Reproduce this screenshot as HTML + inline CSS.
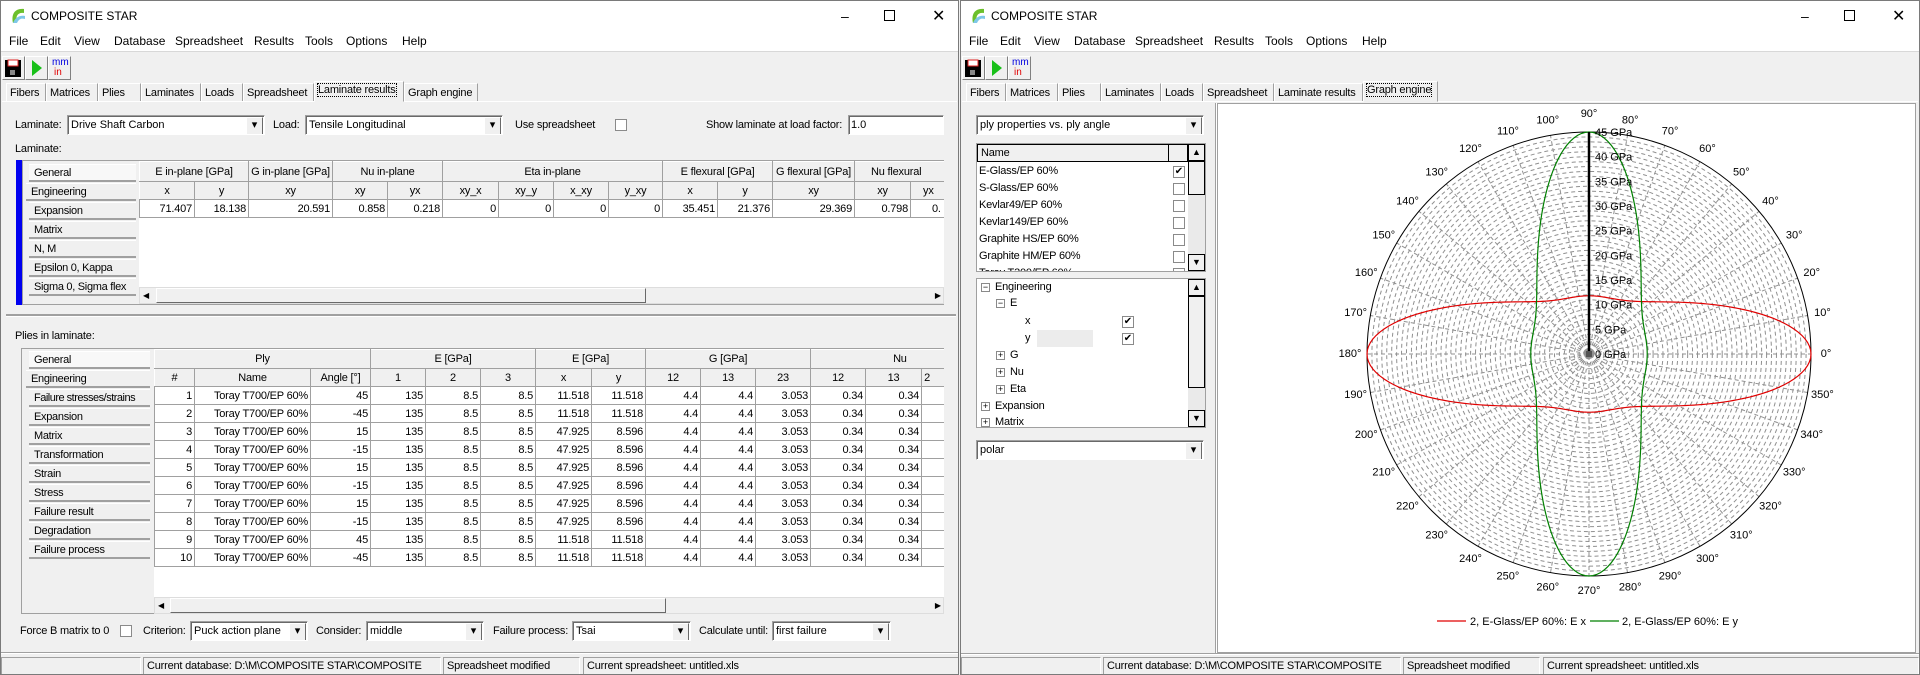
<!DOCTYPE html>
<html><head><meta charset="utf-8">
<style>
*{box-sizing:border-box;margin:0;padding:0}
body{width:1920px;height:675px;overflow:hidden;background:#f0f0f0;font-family:"Liberation Sans",sans-serif;font-size:11px;color:#000;position:relative}
.a{position:absolute}
.win{position:absolute;top:0;height:675px;background:#f0f0f0;border:1px solid #7a7a7a;overflow:hidden}
.title{position:absolute;left:0;top:0;right:0;height:29px;background:#fff}
.title span{position:absolute;left:30px;top:8px;font-size:12px}
.menu{position:absolute;left:0;top:29px;right:0;height:22px;background:#fff;border-bottom:1px solid #d8d8d8;font-size:12px}
.menu b{position:absolute;top:4px;font-weight:normal}
.wb{position:absolute;top:7px;font-size:14px}
.tb{position:absolute;top:55px;width:23px;height:24px;background:#f0f0f0;border:1px solid;border-color:#fff #808080 #808080 #fff}
.tab{position:absolute;top:82px;height:19px;border:1px solid;border-color:#fff #a0a0a0 #f0f0f0 #fff;padding:3px 0 0 3px;font-size:11px;letter-spacing:-0.2px;white-space:nowrap;background:#f0f0f0;overflow:hidden}
.tab.sel{top:80px;height:21px;padding-top:2px;z-index:2}
.tab.sel i{font-style:normal;outline:1px dotted #000;outline-offset:0}
.panel{position:absolute;top:100px;left:1px;right:1px;border-top:1px solid #fff}
.cb{position:absolute;height:20px;background:#fff;border:1px solid;border-color:#a0a0a0 #fff #fff #a0a0a0;box-shadow:inset 1px 1px 0 #696969;padding:3px 0 0 3px;font-size:11px;white-space:nowrap;overflow:hidden}
.cb:after{content:"▾";position:absolute;right:1px;top:1px;width:15px;height:16px;background:#f0f0f0;border:1px solid;border-color:#fff #696969 #696969 #fff;font-size:11px;text-align:center;line-height:14px}
.cb.noarr:after{display:none}
.chk{position:absolute;width:12px;height:12px;border:1px solid #8a8a8a;background:#fff;font-size:10px;line-height:10px;text-align:center}
.lbl{position:absolute;font-size:11px;white-space:nowrap;letter-spacing:-0.2px}
table{border-collapse:collapse;table-layout:fixed;position:absolute}
td{border:1px solid #a0a0a0;height:18px;padding:0 2px;white-space:nowrap;overflow:hidden;font-size:11px;letter-spacing:-0.2px}
td.h{background:#f0f0f0;text-align:center;border-color:#fff #a0a0a0 #a0a0a0 #fff}
td.r{text-align:right;background:#fff}
.lt{position:absolute;height:18px;background:#f0f0f0;border-bottom:2px solid #a0a0a0;border-top:1px solid #fff;padding:2px 0 0 5px;font-size:11px;letter-spacing:-0.3px;white-space:nowrap;overflow:hidden}
.sb{position:absolute;height:17px;background:#f0f0f0;border:1px solid #ddd}
.sb .th{position:absolute;top:0;height:15px;background:#f0f0f0;border:1px solid;border-color:#fff #696969 #696969 #fff}
.st{position:absolute;top:656px;height:19px;border:1px solid;border-color:#a0a0a0 #fff #fff #a0a0a0;padding:2px 0 0 3px;font-size:11px;letter-spacing:-0.2px;white-space:nowrap;overflow:hidden}
.pt{font-size:11px;fill:#000;font-family:"Liberation Sans",sans-serif}
</style></head><body>

<!-- LEFT WINDOW -->
<div class="win" style="left:0;width:959px">
 <div class="title">
  <svg class="a" style="left:8px;top:6px" width="18" height="18" viewBox="0 0 18 18"><path d="M15 2 C6 1 2 7 4 16 L8 16 C6 9 9 5 15 6Z" fill="#6cc02c"/><path d="M4 16 L8 16 C10 12 12 11 16 12 L16 9 C10 8 6 11 4 16Z" fill="#7ec8e8"/></svg>
  <span>COMPOSITE STAR</span>
  <div class="wb" style="left:840px">&#8211;</div><div class="wb" style="left:883px;width:11px;height:11px;border:1px solid #000;top:9px"></div><div class="wb" style="left:931px;top:5px;font-size:16px">✕</div>
 </div>
 <div class="menu"><b style="left:8px">File</b><b style="left:39px">Edit</b><b style="left:73px">View</b><b style="left:113px">Database</b><b style="left:174px">Spreadsheet</b><b style="left:253px">Results</b><b style="left:304px">Tools</b><b style="left:345px">Options</b><b style="left:401px">Help</b></div>
 <div class="tb" style="left:1px"><svg width="21" height="22"><rect x="2" y="3" width="16" height="17" fill="#000"/><rect x="5" y="3" width="10" height="6" fill="#fff" stroke="#e02020"/><rect x="7" y="13" width="5" height="5" fill="#888"/></svg></div>
 <div class="tb" style="left:24px"><svg width="21" height="22"><path d="M6 3 L16 11 L6 19Z" fill="#18c018"/></svg></div>
 <div class="tb" style="left:47px"><div class="a" style="left:3px;top:1px;color:#0000e0;font-size:10px;line-height:10px">mm</div><div class="a" style="left:5px;top:11px;color:#e00000;font-size:10px;line-height:10px">in</div></div>
 <div class="tab" style="left:5px;width:40px">Fibers</div><div class="tab" style="left:45px;width:52px">Matrices</div><div class="tab" style="left:97px;width:43px">Plies</div><div class="tab" style="left:140px;width:60px">Laminates</div><div class="tab" style="left:200px;width:42px">Loads</div><div class="tab" style="left:242px;width:71px">Spreadsheet</div><div class="tab sel" style="left:313px;width:90px"><i>Laminate results</i></div><div class="tab" style="left:403px;width:74px">Graph engine</div>
 <div class="panel" style="height:554px"></div>

 <div class="lbl" style="left:14px;top:118px">Laminate:</div>
 <div class="cb" style="left:66px;top:114px;width:198px">Drive Shaft Carbon</div>
 <div class="lbl" style="left:272px;top:118px">Load:</div>
 <div class="cb" style="left:304px;top:114px;width:198px">Tensile Longitudinal</div>
 <div class="lbl" style="left:514px;top:118px">Use spreadsheet</div>
 <div class="chk" style="left:614px;top:118px"></div>
 <div class="lbl" style="left:705px;top:118px">Show laminate at load factor:</div>
 <div class="cb noarr" style="left:847px;top:114px;width:96px;padding-left:2px">1.0</div>
 <div class="lbl" style="left:14px;top:142px">Laminate:</div>

 <!-- upper grid -->
 <div class="a" style="left:15px;top:159px;width:6px;height:145px;background:#0000f0"></div>
 <div class="a" style="left:21px;top:159px;width:922px;height:145px;border:1px solid #a0a0a0;border-right:none;background:#f0f0f0"></div>
 <div class="lt" style="left:28px;top:163px;width:107px;background:#f8f8f8">General</div>
 <div class="lt" style="left:25px;top:182px;width:110px">Engineering</div>
 <div class="lt" style="left:28px;top:201px;width:107px">Expansion</div>
 <div class="lt" style="left:28px;top:220px;width:107px">Matrix</div>
 <div class="lt" style="left:28px;top:239px;width:107px">N, M</div>
 <div class="lt" style="left:28px;top:258px;width:107px">Epsilon 0, Kappa</div>
 <div class="lt" style="left:28px;top:277px;width:107px">Sigma 0, Sigma flex</div>
 <div class="a" style="left:138px;top:160px;width:805px;height:126px;background:#fff;overflow:hidden">
 <table style="left:0;top:0;width:860px">
  <colgroup><col style="width:55px"><col style="width:54px"><col style="width:84px"><col style="width:55px"><col style="width:55px"><col style="width:56px"><col style="width:55px"><col style="width:55px"><col style="width:54px"><col style="width:55px"><col style="width:55px"><col style="width:82px"><col style="width:56px"><col style="width:89px"></colgroup>
  <tr style="height:20px"><td class="h" colspan="2">E in-plane [GPa]</td><td class="h">G in-plane [GPa]</td><td class="h" colspan="2">Nu in-plane</td><td class="h" colspan="4">Eta in-plane</td><td class="h" colspan="2">E flexural [GPa]</td><td class="h">G flexural [GPa]</td><td class="h" colspan="2" style="text-align:left;padding-left:16px">Nu flexural</td></tr>
  <tr><td class="h">x</td><td class="h">y</td><td class="h">xy</td><td class="h">xy</td><td class="h">yx</td><td class="h">xy_x</td><td class="h">xy_y</td><td class="h">x_xy</td><td class="h">y_xy</td><td class="h">x</td><td class="h">y</td><td class="h">xy</td><td class="h">xy</td><td class="h" style="text-align:left;padding-left:12px">yx</td></tr>
  <tr><td class="r">71.407</td><td class="r">18.138</td><td class="r">20.591</td><td class="r">0.858</td><td class="r">0.218</td><td class="r">0</td><td class="r">0</td><td class="r">0</td><td class="r">0</td><td class="r">35.451</td><td class="r">21.376</td><td class="r">29.369</td><td class="r">0.798</td><td style="background:#fff;padding-left:21px">0.</td></tr>
 </table></div>
 <div class="sb" style="left:138px;top:286px;width:805px"><div class="a" style="left:3px;top:3px;font-size:8px">◀</div><div class="th" style="left:16px;width:490px"></div><div class="a" style="right:2px;top:3px;font-size:8px">▶</div></div>
 <div class="a" style="left:5px;top:313px;width:950px;height:3px;border-top:2px solid #a0a0a0;border-bottom:1px solid #fff"></div>

 <div class="lbl" style="left:14px;top:329px">Plies in laminate:</div>
 <!-- lower grid -->
 <div class="a" style="left:20px;top:347px;width:923px;height:266px;border:1px solid #a0a0a0;border-right:none;background:#f0f0f0"></div>
 <div class="lt" style="left:28px;top:350px;width:121px;background:#f8f8f8">General</div>
 <div class="lt" style="left:25px;top:369px;width:124px">Engineering</div>
 <div class="lt" style="left:28px;top:388px;width:121px;letter-spacing:-0.5px">Failure stresses/strains</div>
 <div class="lt" style="left:28px;top:407px;width:121px">Expansion</div>
 <div class="lt" style="left:28px;top:426px;width:121px">Matrix</div>
 <div class="lt" style="left:28px;top:445px;width:121px">Transformation</div>
 <div class="lt" style="left:28px;top:464px;width:121px">Strain</div>
 <div class="lt" style="left:28px;top:483px;width:121px">Stress</div>
 <div class="lt" style="left:28px;top:502px;width:121px">Failure result</div>
 <div class="lt" style="left:28px;top:521px;width:121px">Degradation</div>
 <div class="lt" style="left:28px;top:540px;width:121px">Failure process</div>
 <div class="a" style="left:153px;top:348px;width:790px;height:248px;background:#fff;overflow:hidden">
 <table style="left:0;top:0;width:840px">
  <colgroup><col style="width:40px"><col style="width:116px"><col style="width:60px"><col style="width:55px"><col style="width:55px"><col style="width:55px"><col style="width:56px"><col style="width:54px"><col style="width:55px"><col style="width:55px"><col style="width:55px"><col style="width:55px"><col style="width:56px"><col style="width:73px"></colgroup>
  <tr style="height:19px"><td class="h" colspan="3">Ply</td><td class="h" colspan="3">E [GPa]</td><td class="h" colspan="2">E [GPa]</td><td class="h" colspan="3">G [GPa]</td><td class="h" colspan="3" style="text-align:left;padding-left:82px">Nu</td></tr>
  <tr><td class="h">#</td><td class="h">Name</td><td class="h">Angle [°]</td><td class="h">1</td><td class="h">2</td><td class="h">3</td><td class="h">x</td><td class="h">y</td><td class="h">12</td><td class="h">13</td><td class="h">23</td><td class="h">12</td><td class="h">13</td><td class="h" style="text-align:left">2</td></tr>
  <tr><td class="r">1</td><td class="r">Toray T700/EP 60%</td><td class="r">45</td><td class="r">135</td><td class="r">8.5</td><td class="r">8.5</td><td class="r">11.518</td><td class="r">11.518</td><td class="r">4.4</td><td class="r">4.4</td><td class="r">3.053</td><td class="r">0.34</td><td class="r">0.34</td><td class="r"></td></tr>
  <tr><td class="r">2</td><td class="r">Toray T700/EP 60%</td><td class="r">-45</td><td class="r">135</td><td class="r">8.5</td><td class="r">8.5</td><td class="r">11.518</td><td class="r">11.518</td><td class="r">4.4</td><td class="r">4.4</td><td class="r">3.053</td><td class="r">0.34</td><td class="r">0.34</td><td class="r"></td></tr>
  <tr><td class="r">3</td><td class="r">Toray T700/EP 60%</td><td class="r">15</td><td class="r">135</td><td class="r">8.5</td><td class="r">8.5</td><td class="r">47.925</td><td class="r">8.596</td><td class="r">4.4</td><td class="r">4.4</td><td class="r">3.053</td><td class="r">0.34</td><td class="r">0.34</td><td class="r"></td></tr>
  <tr><td class="r">4</td><td class="r">Toray T700/EP 60%</td><td class="r">-15</td><td class="r">135</td><td class="r">8.5</td><td class="r">8.5</td><td class="r">47.925</td><td class="r">8.596</td><td class="r">4.4</td><td class="r">4.4</td><td class="r">3.053</td><td class="r">0.34</td><td class="r">0.34</td><td class="r"></td></tr>
  <tr><td class="r">5</td><td class="r">Toray T700/EP 60%</td><td class="r">15</td><td class="r">135</td><td class="r">8.5</td><td class="r">8.5</td><td class="r">47.925</td><td class="r">8.596</td><td class="r">4.4</td><td class="r">4.4</td><td class="r">3.053</td><td class="r">0.34</td><td class="r">0.34</td><td class="r"></td></tr>
  <tr><td class="r">6</td><td class="r">Toray T700/EP 60%</td><td class="r">-15</td><td class="r">135</td><td class="r">8.5</td><td class="r">8.5</td><td class="r">47.925</td><td class="r">8.596</td><td class="r">4.4</td><td class="r">4.4</td><td class="r">3.053</td><td class="r">0.34</td><td class="r">0.34</td><td class="r"></td></tr>
  <tr><td class="r">7</td><td class="r">Toray T700/EP 60%</td><td class="r">15</td><td class="r">135</td><td class="r">8.5</td><td class="r">8.5</td><td class="r">47.925</td><td class="r">8.596</td><td class="r">4.4</td><td class="r">4.4</td><td class="r">3.053</td><td class="r">0.34</td><td class="r">0.34</td><td class="r"></td></tr>
  <tr><td class="r">8</td><td class="r">Toray T700/EP 60%</td><td class="r">-15</td><td class="r">135</td><td class="r">8.5</td><td class="r">8.5</td><td class="r">47.925</td><td class="r">8.596</td><td class="r">4.4</td><td class="r">4.4</td><td class="r">3.053</td><td class="r">0.34</td><td class="r">0.34</td><td class="r"></td></tr>
  <tr><td class="r">9</td><td class="r">Toray T700/EP 60%</td><td class="r">45</td><td class="r">135</td><td class="r">8.5</td><td class="r">8.5</td><td class="r">11.518</td><td class="r">11.518</td><td class="r">4.4</td><td class="r">4.4</td><td class="r">3.053</td><td class="r">0.34</td><td class="r">0.34</td><td class="r"></td></tr>
  <tr><td class="r">10</td><td class="r">Toray T700/EP 60%</td><td class="r">-45</td><td class="r">135</td><td class="r">8.5</td><td class="r">8.5</td><td class="r">11.518</td><td class="r">11.518</td><td class="r">4.4</td><td class="r">4.4</td><td class="r">3.053</td><td class="r">0.34</td><td class="r">0.34</td><td class="r"></td></tr>
 </table></div>
 <div class="sb" style="left:153px;top:596px;width:790px"><div class="a" style="left:3px;top:3px;font-size:8px">◀</div><div class="th" style="left:15px;width:496px"></div><div class="a" style="right:2px;top:3px;font-size:8px">▶</div></div>

 <div class="lbl" style="left:19px;top:624px">Force B matrix to 0</div>
 <div class="chk" style="left:119px;top:624px"></div>
 <div class="lbl" style="left:142px;top:624px">Criterion:</div>
 <div class="cb" style="left:189px;top:620px;width:118px">Puck action plane</div>
 <div class="lbl" style="left:315px;top:624px">Consider:</div>
 <div class="cb" style="left:365px;top:620px;width:118px">middle</div>
 <div class="lbl" style="left:492px;top:624px">Failure process:</div>
 <div class="cb" style="left:571px;top:620px;width:119px">Tsai</div>
 <div class="lbl" style="left:698px;top:624px">Calculate until:</div>
 <div class="cb" style="left:771px;top:620px;width:119px">first failure</div>
 <div class="a" style="left:0;top:651px;width:959px;height:2px;border-top:1px solid #a0a0a0;border-bottom:1px solid #fff"></div>
 <div class="st" style="left:0;width:140px"></div>
 <div class="st" style="left:142px;width:298px">Current database: D:\M\COMPOSITE STAR\COMPOSITE</div>
 <div class="st" style="left:442px;width:137px">Spreadsheet modified</div>
 <div class="st" style="left:582px;width:376px">Current spreadsheet: untitled.xls</div>
</div>

<!-- RIGHT WINDOW -->
<div class="win" style="left:960px;width:960px">
 <div class="title">
  <svg class="a" style="left:8px;top:6px" width="18" height="18" viewBox="0 0 18 18"><path d="M15 2 C6 1 2 7 4 16 L8 16 C6 9 9 5 15 6Z" fill="#6cc02c"/><path d="M4 16 L8 16 C10 12 12 11 16 12 L16 9 C10 8 6 11 4 16Z" fill="#7ec8e8"/></svg>
  <span>COMPOSITE STAR</span>
  <div class="wb" style="left:840px">&#8211;</div><div class="wb" style="left:883px;width:11px;height:11px;border:1px solid #000;top:9px"></div><div class="wb" style="left:931px;top:5px;font-size:16px">✕</div>
 </div>
 <div class="menu"><b style="left:8px">File</b><b style="left:39px">Edit</b><b style="left:73px">View</b><b style="left:113px">Database</b><b style="left:174px">Spreadsheet</b><b style="left:253px">Results</b><b style="left:304px">Tools</b><b style="left:345px">Options</b><b style="left:401px">Help</b></div>
 <div class="tb" style="left:1px"><svg width="21" height="22"><rect x="2" y="3" width="16" height="17" fill="#000"/><rect x="5" y="3" width="10" height="6" fill="#fff" stroke="#e02020"/><rect x="7" y="13" width="5" height="5" fill="#888"/></svg></div>
 <div class="tb" style="left:24px"><svg width="21" height="22"><path d="M6 3 L16 11 L6 19Z" fill="#18c018"/></svg></div>
 <div class="tb" style="left:47px"><div class="a" style="left:3px;top:1px;color:#0000e0;font-size:10px;line-height:10px">mm</div><div class="a" style="left:5px;top:11px;color:#e00000;font-size:10px;line-height:10px">in</div></div>
 <div class="tab" style="left:5px;width:40px">Fibers</div><div class="tab" style="left:45px;width:52px">Matrices</div><div class="tab" style="left:97px;width:43px">Plies</div><div class="tab" style="left:140px;width:60px">Laminates</div><div class="tab" style="left:200px;width:42px">Loads</div><div class="tab" style="left:242px;width:71px">Spreadsheet</div><div class="tab" style="left:313px;width:89px">Laminate results</div><div class="tab sel" style="left:402px;width:75px"><i>Graph engine</i></div>
 <div class="panel" style="height:554px"></div>

 <div class="cb" style="left:15px;top:114px;width:228px">ply properties vs. ply angle</div>
 <!-- list -->
 <div class="a" style="left:15px;top:142px;width:230px;height:129px;background:#fff;border:1px solid #a0a0a0;overflow:hidden">
  <div class="a" style="left:0;top:0;width:211px;height:18px;background:#f0f0f0;border:1px solid #000"></div>
  <div class="lbl" style="left:4px;top:3px">Name</div>
  <div class="a" style="left:191px;top:0;width:1px;height:18px;background:#000"></div>
  <div class="lbl" style="left:2px;top:21px">E-Glass/EP 60%</div><div class="chk" style="left:196px;top:22px">✔</div>
  <div class="lbl" style="left:2px;top:38px">S-Glass/EP 60%</div><div class="chk" style="left:196px;top:39px"></div>
  <div class="lbl" style="left:2px;top:55px">Kevlar49/EP 60%</div><div class="chk" style="left:196px;top:56px"></div>
  <div class="lbl" style="left:2px;top:72px">Kevlar149/EP 60%</div><div class="chk" style="left:196px;top:73px"></div>
  <div class="lbl" style="left:2px;top:89px">Graphite HS/EP 60%</div><div class="chk" style="left:196px;top:90px"></div>
  <div class="lbl" style="left:2px;top:106px">Graphite HM/EP 60%</div><div class="chk" style="left:196px;top:107px"></div>
  <div class="lbl" style="left:2px;top:123px">Toray T300/EP 60%</div><div class="chk" style="left:196px;top:124px"></div>
  <div class="a" style="left:211px;top:0;width:17px;height:127px;background:#eaeaea"></div>
  <div class="a" style="left:211px;top:0;width:17px;height:17px;background:#f0f0f0;border:1px solid #000;font-size:9px;text-align:center;line-height:15px">▲</div>
  <div class="a" style="left:211px;top:17px;width:17px;height:34px;background:#f0f0f0;border:1px solid #000"></div>
  <div class="a" style="left:211px;top:110px;width:17px;height:17px;background:#f0f0f0;border:1px solid #000;font-size:9px;text-align:center;line-height:15px">▼</div>
 </div>
 <!-- tree -->
 <div class="a" style="left:15px;top:277px;width:230px;height:150px;background:#fff;border:1px solid #a0a0a0;overflow:hidden">
  <div class="a" style="left:60px;top:51px;width:56px;height:17px;background:#ececec"></div>
  <div class="chk" style="left:4px;top:4px;width:9px;height:9px;font-size:9px;line-height:7px">−</div><div class="lbl" style="left:18px;top:2px">Engineering</div>
  <div class="chk" style="left:19px;top:20px;width:9px;height:9px;font-size:9px;line-height:7px">−</div><div class="lbl" style="left:33px;top:18px">E</div>
  <div class="lbl" style="left:48px;top:36px">x</div><div class="chk" style="left:145px;top:37px">✔</div>
  <div class="lbl" style="left:48px;top:53px">y</div><div class="chk" style="left:145px;top:54px">✔</div>
  <div class="chk" style="left:19px;top:72px;width:9px;height:9px;font-size:9px;line-height:7px">+</div><div class="lbl" style="left:33px;top:70px">G</div>
  <div class="chk" style="left:19px;top:89px;width:9px;height:9px;font-size:9px;line-height:7px">+</div><div class="lbl" style="left:33px;top:87px">Nu</div>
  <div class="chk" style="left:19px;top:106px;width:9px;height:9px;font-size:9px;line-height:7px">+</div><div class="lbl" style="left:33px;top:104px">Eta</div>
  <div class="chk" style="left:4px;top:123px;width:9px;height:9px;font-size:9px;line-height:7px">+</div><div class="lbl" style="left:18px;top:121px">Expansion</div>
  <div class="chk" style="left:4px;top:139px;width:9px;height:9px;font-size:9px;line-height:7px">+</div><div class="lbl" style="left:18px;top:137px">Matrix</div>
  <div class="a" style="left:211px;top:0;width:17px;height:148px;background:#eaeaea"></div>
  <div class="a" style="left:211px;top:0;width:17px;height:17px;background:#f0f0f0;border:1px solid #000;font-size:9px;text-align:center;line-height:15px">▲</div>
  <div class="a" style="left:211px;top:17px;width:17px;height:92px;background:#f0f0f0;border:1px solid #000"></div>
  <div class="a" style="left:211px;top:131px;width:17px;height:17px;background:#f0f0f0;border:1px solid #000;font-size:9px;text-align:center;line-height:15px">▼</div>
 </div>
 <div class="cb" style="left:15px;top:439px;width:228px">polar</div>
 <div class="a" style="left:254px;top:102px;width:2px;height:550px;border-left:1px solid #a0a0a0;border-right:1px solid #fff"></div>

 <!-- chart -->
 <div class="a" style="left:256px;top:102px;width:699px;height:550px;background:#fff;border:1px solid #a0a0a0">
 <svg width="697" height="548" style="position:absolute;left:0;top:0">
  <g transform="translate(371,250)" fill="none">
   <g stroke="#909090" stroke-width="1" stroke-dasharray="4,3">
    <line x1="-222" y1="0" x2="222" y2="0"/><line x1="-218.6" y1="38.5" x2="218.6" y2="-38.5"/><line x1="-208.6" y1="75.9" x2="208.6" y2="-75.9"/><line x1="-192.3" y1="111" x2="192.3" y2="-111"/><line x1="-170.1" y1="142.7" x2="170.1" y2="-142.7"/><line x1="-142.7" y1="170.1" x2="142.7" y2="-170.1"/><line x1="-111" y1="192.3" x2="111" y2="-192.3"/><line x1="-75.9" y1="208.6" x2="75.9" y2="-208.6"/><line x1="-38.5" y1="218.6" x2="38.5" y2="-218.6"/>
    <line x1="0" y1="-222" x2="0" y2="222"/><line x1="38.5" y1="218.6" x2="-38.5" y2="-218.6"/><line x1="75.9" y1="208.6" x2="-75.9" y2="-208.6"/><line x1="111" y1="192.3" x2="-111" y2="-192.3"/><line x1="142.7" y1="170.1" x2="-142.7" y2="-170.1"/><line x1="170.1" y1="142.7" x2="-170.1" y2="-142.7"/><line x1="192.3" y1="111" x2="-192.3" y2="-111"/><line x1="208.6" y1="75.9" x2="-208.6" y2="-75.9"/><line x1="218.6" y1="38.5" x2="-218.6" y2="-38.5"/>
    <circle r="4.93"/><circle r="9.87"/><circle r="14.8"/><circle r="19.73"/><circle r="24.67"/><circle r="29.6"/><circle r="34.53"/><circle r="39.47"/><circle r="44.4"/><circle r="49.33"/><circle r="54.27"/><circle r="59.2"/><circle r="64.13"/><circle r="69.07"/><circle r="74"/><circle r="78.93"/><circle r="83.87"/><circle r="88.8"/><circle r="93.73"/><circle r="98.67"/><circle r="103.6"/><circle r="108.53"/><circle r="113.47"/><circle r="118.4"/><circle r="123.33"/><circle r="128.27"/><circle r="133.2"/><circle r="138.13"/><circle r="143.07"/><circle r="148"/><circle r="152.93"/><circle r="157.87"/><circle r="162.8"/><circle r="167.73"/><circle r="172.67"/><circle r="177.6"/><circle r="182.53"/><circle r="187.47"/><circle r="192.4"/><circle r="197.33"/><circle r="202.27"/><circle r="207.2"/><circle r="212.13"/><circle r="217.07"/>
   </g>
   <circle r="222" stroke="#000" stroke-width="1"/>
   <path id="cx" stroke="#e00000" stroke-width="1.2"/>
   <path id="cy" stroke="#008000" stroke-width="1.2"/>
   <line x1="0" y1="0" x2="0" y2="-222" stroke="#000" stroke-width="2.5"/>
   <rect x="-3" y="-3" width="6" height="6" fill="#555"/>
   <g>
    <text class="pt" x="6" y="4">0 GPa</text><text class="pt" x="6" y="-20.7">5 GPa</text><text class="pt" x="6" y="-45.3">10 GPa</text><text class="pt" x="6" y="-70">15 GPa</text><text class="pt" x="6" y="-94.7">20 GPa</text><text class="pt" x="6" y="-119.3">25 GPa</text><text class="pt" x="6" y="-144">30 GPa</text><text class="pt" x="6" y="-168.7">35 GPa</text><text class="pt" x="6" y="-193.3">40 GPa</text><text class="pt" x="6" y="-218">45 GPa</text>
   </g>
   <g text-anchor="middle" dominant-baseline="central">
    <text class="pt" x="237" y="0">0°</text><text class="pt" x="233.4" y="-41.2">10°</text><text class="pt" x="222.7" y="-81.1">20°</text><text class="pt" x="205.2" y="-118.5">30°</text><text class="pt" x="181.5" y="-152.3">40°</text><text class="pt" x="152.3" y="-181.5">50°</text><text class="pt" x="118.5" y="-205.2">60°</text><text class="pt" x="81.1" y="-222.7">70°</text><text class="pt" x="41.2" y="-233.4">80°</text><text class="pt" x="0" y="-240">90°</text><text class="pt" x="-41.2" y="-233.4">100°</text><text class="pt" x="-81.1" y="-222.7">110°</text><text class="pt" x="-118.5" y="-205.2">120°</text><text class="pt" x="-152.3" y="-181.5">130°</text><text class="pt" x="-181.5" y="-152.3">140°</text><text class="pt" x="-205.2" y="-118.5">150°</text><text class="pt" x="-222.7" y="-81.1">160°</text><text class="pt" x="-233.4" y="-41.2">170°</text><text class="pt" x="-239" y="0">180°</text><text class="pt" x="-233.4" y="41.2">190°</text><text class="pt" x="-222.7" y="81.1">200°</text><text class="pt" x="-205.2" y="118.5">210°</text><text class="pt" x="-181.5" y="152.3">220°</text><text class="pt" x="-152.3" y="181.5">230°</text><text class="pt" x="-118.5" y="205.2">240°</text><text class="pt" x="-81.1" y="222.7">250°</text><text class="pt" x="-41.2" y="233.4">260°</text><text class="pt" x="0" y="237">270°</text><text class="pt" x="41.2" y="233.4">280°</text><text class="pt" x="81.1" y="222.7">290°</text><text class="pt" x="118.5" y="205.2">300°</text><text class="pt" x="152.3" y="181.5">310°</text><text class="pt" x="181.5" y="152.3">320°</text><text class="pt" x="205.2" y="118.5">330°</text><text class="pt" x="222.7" y="81.1">340°</text><text class="pt" x="233.4" y="41.2">350°</text>
   </g>
  </g>
  <line x1="219" y1="517" x2="248" y2="517" stroke="#e00000" stroke-width="1.2"/>
  <text class="pt" x="252" y="521">2, E-Glass/EP 60%: E x</text>
  <line x1="372" y1="517" x2="401" y2="517" stroke="#008000" stroke-width="1.2"/>
  <text class="pt" x="404" y="521">2, E-Glass/EP 60%: E y</text>
 </svg>
 </div>
 <div class="a" style="left:0;top:652px;width:960px;height:2px;border-top:1px solid #a0a0a0;border-bottom:1px solid #fff"></div>
 <div class="st" style="left:0;width:140px"></div>
 <div class="st" style="left:142px;width:298px">Current database: D:\M\COMPOSITE STAR\COMPOSITE</div>
 <div class="st" style="left:442px;width:137px">Spreadsheet modified</div>
 <div class="st" style="left:582px;width:376px">Current spreadsheet: untitled.xls</div>
</div>

<script>
(function(){
 var E1=45,E2=11.8,G=5.8,nu=0.3,k=222/45;
 function E(t){var c=Math.cos(t),s=Math.sin(t);return 1/(c*c*c*c/E1+s*s*c*c*(1/G-2*nu/E1)+s*s*s*s/E2);}
 function path(off){var d="";for(var i=0;i<=360;i++){var t=i*Math.PI/180;var r=E(t+off)*k;d+=(i?"L":"M")+(r*Math.cos(t)).toFixed(2)+" "+(-r*Math.sin(t)).toFixed(2);}return d+"Z";}
 document.getElementById("cx").setAttribute("d",path(0));
 document.getElementById("cy").setAttribute("d",path(Math.PI/2));
})();
</script>
</body></html>
